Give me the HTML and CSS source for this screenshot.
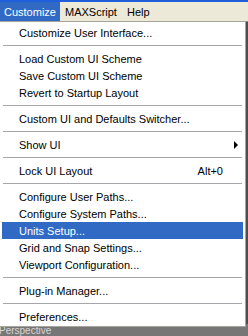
FILE: index.html
```html
<!DOCTYPE html>
<html lang="en">
<head>
    <meta charset="UTF-8">
    <title>Customize Menu</title>
    <link rel="stylesheet" href="styles.css">
</head>
<body>
    <div class="screen">
        <div class="title-strip"></div>
        <div class="menubar">
            <span class="menubar-item active">Customize</span>
            <span class="menubar-item">MAXScript</span>
            <span class="menubar-item">Help</span>
        </div>
        <div class="viewports">
            <div class="vp vp-top"></div>
            <div class="vp vp-persp"><span class="vp-label">Perspective</span></div>
        </div>

        <div class="dropdown">
            <div class="item">Customize User Interface...</div>
            <div class="sep"></div>
            <div class="item">Load Custom UI Scheme</div>
            <div class="item">Save Custom UI Scheme</div>
            <div class="item">Revert to Startup Layout</div>
            <div class="sep"></div>
            <div class="item">Custom UI and Defaults Switcher...</div>
            <div class="sep"></div>
            <div class="item">Show UI<span class="arrow"></span></div>
            <div class="sep"></div>
            <div class="item">Lock UI Layout<span class="shortcut">Alt+0</span></div>
            <div class="sep"></div>
            <div class="item">Configure User Paths...</div>
            <div class="item">Configure System Paths...</div>
            <div class="item selected">Units Setup...</div>
            <div class="item">Grid and Snap Settings...</div>
            <div class="item">Viewport Configuration...</div>
            <div class="sep"></div>
            <div class="item">Plug-in Manager...</div>
            <div class="sep"></div>
            <div class="item">Preferences...</div>
        </div>
    </div>
</body>
</html>
```

FILE: styles.css
```css
body {
    margin: 0;
    font-family: 'Liberation Sans', Arial, sans-serif;
    font-size: 11px;
    color: #000;
    overflow: hidden;
}

.screen {
    position: relative;
    width: 248px;
    height: 336px;
    overflow: hidden;
    background: #6f6f6f;
}

.title-strip {
    height: 2px;
    background: #1f5fdc;
}

.menubar {
    display: flex;
    height: 19px;
    background: #ece9d8;
}

.menubar-item {
    display: flex;
    align-items: center;
    padding: 0 5px;
}

.menubar-item.active {
    padding: 0 4px;
    background: #316ac5;
    color: #fff;
}

.viewports {
    display: flex;
    flex-direction: column;
}

.vp-top {
    height: 302px;
    background: #4e4e4e;
    border-top: 1px solid #8a8a8a;
}

.vp-persp {
    height: 12px;
    background: #767676;
}

.vp-label {
    display: block;
    margin-left: -1px;
    padding-top: 1px;
    color: #d6d6d6;
    font-size: 10px;
    line-height: 12px;
}

/* dropdown sits over the viewports */
.dropdown {
    position: absolute;
    top: 21px;
    left: -1px;
    width: 241px;
    padding: 2px 2px 1px 2px;
    background: #fff;
    border: 1px solid #a6a59c;
}

.item {
    display: flex;
    align-items: center;
    height: 17px;
    padding: 0 20px 0 17px;
    white-space: nowrap;
}

.item.selected {
    background: #316ac5;
    color: #fff;
}

.shortcut {
    margin-left: auto;
}

.arrow {
    margin-left: auto;
    margin-right: -15px;
    width: 0;
    height: 0;
    border-left: 4px solid #000;
    border-top: 4px solid transparent;
    border-bottom: 4px solid transparent;
}

.sep {
    height: 9px;
    display: flex;
    align-items: center;
    padding: 0 1px;
}

.sep::before {
    content: "";
    flex: 1;
    height: 1px;
    background: #a7a6aa;
}
```
